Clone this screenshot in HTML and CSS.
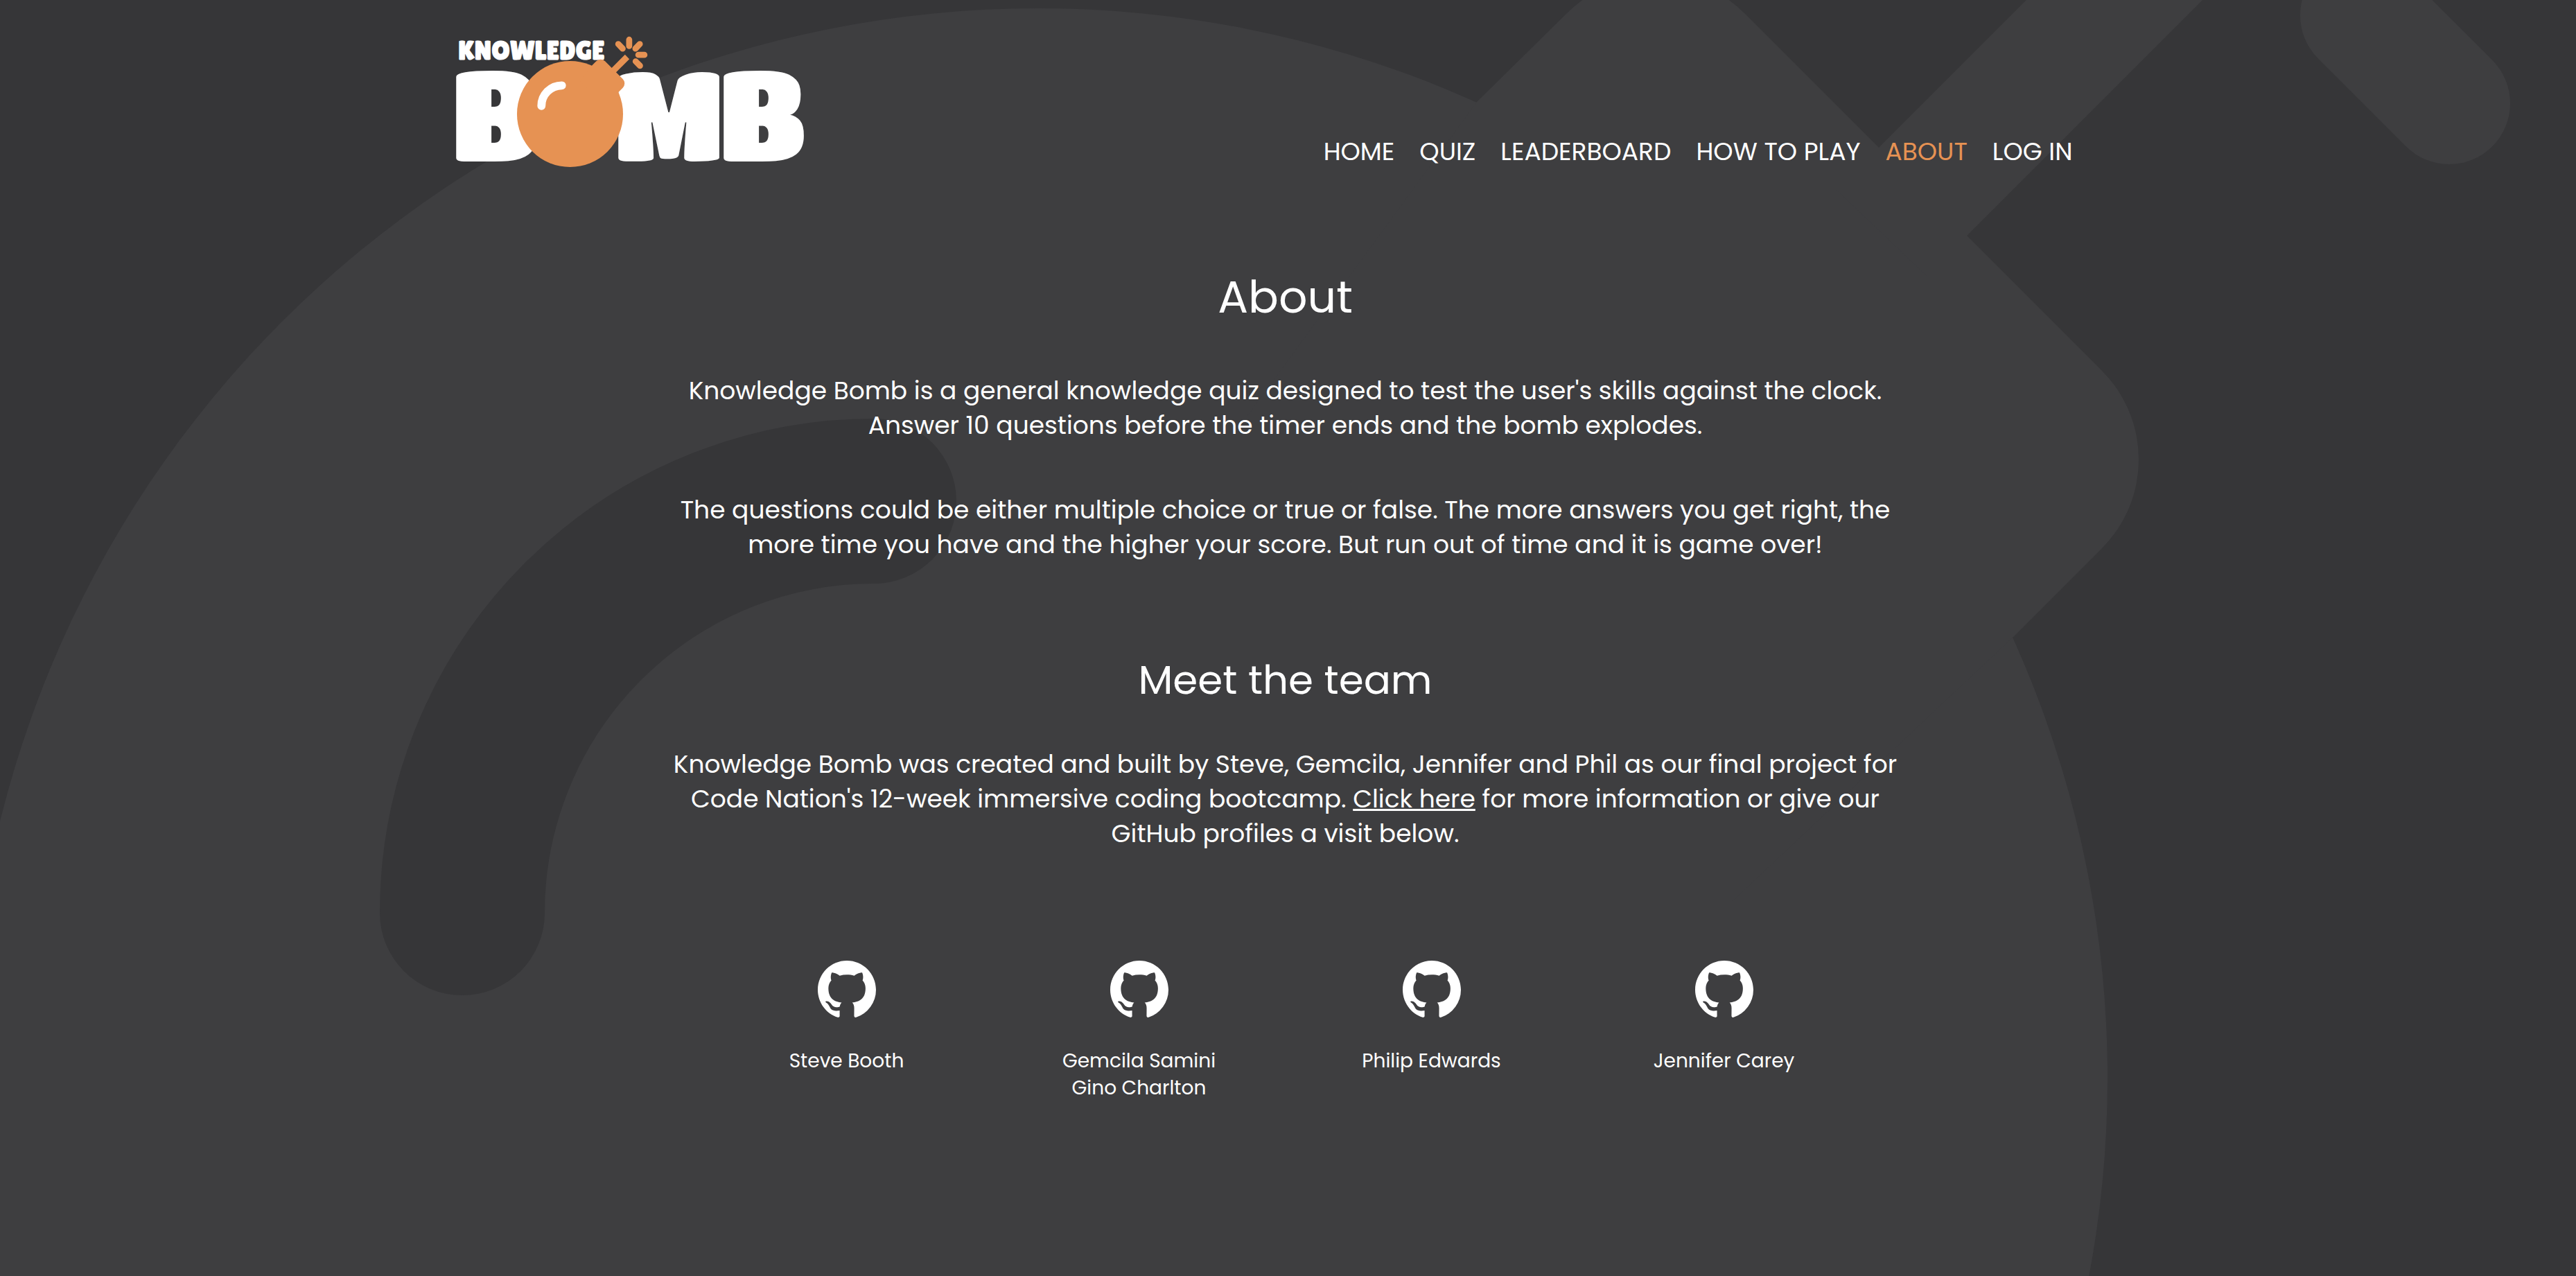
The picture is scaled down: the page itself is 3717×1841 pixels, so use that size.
FILE: index.html
```html
<!DOCTYPE html>
<html lang="en">
<head>
<meta charset="utf-8">
<meta name="viewport" content="width=device-width, initial-scale=1">
<title>Knowledge Bomb - About</title>
<link rel="stylesheet" href="styles.css">
</head>
<body>
<svg class="backdrop" viewBox="0 0 3717 1841" preserveAspectRatio="xMidYMin slice" aria-hidden="true">
  <defs>
    <g id="bomb">
      <circle cx="1498" cy="1555" r="1543"/>
      <path d="M2131 147L2261 19A181 181 0 0 1 2517 19L3033 535A181 181 0 0 1 3033 791L2906 918L2500 1300L1800 600Z"/>
      <path d="M2650 274L3097 -173L3224 -46L2780 398Z"/>
      <path class="sparks" d="M3219 -609V-424M2902 -482L3029 -349M3528 -482L3401 -349M3486 -167H3663M3407 22L3534 149"/>
    </g>
    <path id="shine" d="M667 1317A594 594 0 0 1 1261 723"/>
    <path id="github" d="M8 0C3.58 0 0 3.58 0 8c0 3.54 2.29 6.53 5.47 7.59.4.07.55-.17.55-.38 0-.19-.01-.82-.01-1.49-2.01.37-2.53-.49-2.69-.94-.09-.23-.48-.94-.82-1.13-.28-.15-.68-.52-.01-.53.63-.01 1.08.58 1.23.82.72 1.21 1.87.87 2.33.66.07-.52.28-.87.51-1.07-1.78-.2-3.64-.89-3.64-3.95 0-.87.31-1.59.82-2.15-.08-.2-.36-1.02.08-2.12 0 0 .67-.21 2.2.82.64-.18 1.32-.27 2-.27s1.36.09 2 .27c1.53-1.04 2.2-.82 2.2-.82.44 1.1.16 1.92.08 2.12.51.56.82 1.27.82 2.15 0 3.07-1.87 3.75-3.65 3.95.29.25.54.73.54 1.48 0 1.07-.01 1.93-.01 2.2 0 .21.15.46.55.38A8.01 8.01 0 0 0 16 8c0-4.42-3.58-8-8-8z"/>
  </defs>
  <use class="backdrop-bomb" href="#bomb"/>
  <use class="backdrop-shine" href="#shine"/>
</svg>
<div class="page">
  <header class="header">
    <a class="logo-link" href="#" aria-label="Knowledge Bomb home">
      <svg class="logo" viewBox="0 0 510 194">
        <text class="logo-top" x="6" y="36">KNOWLEDGE</text>
        <text class="logo-main" x="-4" y="183">B</text>
        <text class="logo-main" x="230" y="183">M</text>
        <text class="logo-main" x="382" y="183">B</text>
        <g transform="translate(167.5 114.5) scale(.0496) translate(-1498 -1554)">
          <use class="logo-bomb" href="#bomb"/>
          <use class="logo-shine" href="#shine"/>
        </g>
      </svg>
    </a>
    <nav class="nav">
      <a href="#">HOME</a>
      <a href="#">QUIZ</a>
      <a href="#">LEADERBOARD</a>
      <a href="#">HOW TO PLAY</a>
      <a class="active" href="#" aria-current="page">ABOUT</a>
      <a href="#">LOG IN</a>
    </nav>
  </header>
  <main class="content">
    <h1>About</h1>
    <p>Knowledge Bomb is a general knowledge quiz designed to test the user's skills against the clock. Answer 10 questions before the timer ends and the bomb explodes.</p>
    <p>The questions could be either multiple choice or true or false. The more answers you get right, the more time you have and the higher your score. But run out of time and it is game over!</p>
    <h2>Meet the team</h2>
    <p>Knowledge Bomb was created and built by Steve, Gemcila, Jennifer and Phil as our final project for Code Nation's 12-week immersive coding bootcamp. <a href="#">Click here</a> for more information or give our GitHub profiles a visit below.</p>
    <ul class="team">
      <li><a href="#"><svg class="github" viewBox="0 0 16 16" aria-hidden="true"><use href="#github"/></svg><span>Steve Booth</span></a></li>
      <li><a href="#"><svg class="github" viewBox="0 0 16 16" aria-hidden="true"><use href="#github"/></svg><span>Gemcila Samini<br>Gino Charlton</span></a></li>
      <li><a href="#"><svg class="github" viewBox="0 0 16 16" aria-hidden="true"><use href="#github"/></svg><span>Philip Edwards</span></a></li>
      <li><a href="#"><svg class="github" viewBox="0 0 16 16" aria-hidden="true"><use href="#github"/></svg><span>Jennifer Carey</span></a></li>
    </ul>
  </main>
</div>
</body>
</html>
```

FILE: styles.css
```css
* {
  box-sizing: border-box;
}

body {
  margin: 0;
  min-height: 100vh;
  position: relative;
  overflow-x: hidden;
  background: #363638;
  color: #fff;
  font-family: "Poppins", "Inter", sans-serif;
  font-size: 36px;
  line-height: 50px;
}

a {
  color: inherit;
}

.backdrop {
  position: absolute;
  top: 0;
  left: 0;
  width: 100%;
  height: 100%;
  z-index: -1;
}

.sparks {
  fill: none;
  stroke: currentColor;
  stroke-width: 176px;
  stroke-linecap: round;
}

.backdrop-bomb {
  fill: #3e3e40;
  color: #3e3e40;
}

.backdrop-shine,
.logo-shine {
  fill: none;
  stroke: #363638;
  stroke-width: 238px;
  stroke-linecap: round;
}

.page {
  padding: 50px 8px 120px 0;
}

.header {
  display: flex;
  flex-wrap: wrap;
  justify-content: space-between;
  align-items: flex-end;
  max-width: 2400px;
  margin: 0 auto 140px;
  padding-right: 64px;
}

.logo-link,
.logo {
  display: block;
}

.logo {
  width: 510px;
  height: 194px;
  overflow: visible;
}

.logo text {
  fill: #fff;
}

.logo .logo-top {
  font-family: "Lilita One", "Lato", sans-serif;
  font-size: 38px;
  stroke: #fff;
  stroke-width: 1px;
}

.logo .logo-main {
  font-family: "Titan One", "Lato", sans-serif;
  font-size: 182px;
}

.logo-bomb {
  fill: #e69253;
  color: #e69253;
}

.logo-shine {
  stroke: #fff;
}

.nav {
  display: flex;
  flex-wrap: wrap;
  gap: 36px;
}

.nav a {
  text-decoration: none;
}

.nav .active {
  color: #e69253;
}

.content {
  max-width: 1800px;
  margin: 0 auto;
  text-align: center;
}

h1,
h2 {
  margin: 0;
  font-weight: 400;
}

h1 {
  margin-bottom: 65px;
  font-size: 65px;
  line-height: 90px;
}

h2 {
  margin: 130px 0 57px;
  font-size: 58px;
  line-height: 80px;
}

p {
  margin: 0 0 72px;
}

.team {
  display: grid;
  grid-template-columns: repeat(4, 1fr);
  max-width: 1688px;
  margin: 158px auto 0;
  padding: 0;
  list-style: none;
  font-size: 28px;
  line-height: 39px;
}

.team a {
  display: flex;
  flex-direction: column;
  align-items: center;
  gap: 41px;
  text-decoration: none;
}

.github {
  width: 84px;
  height: 84px;
  fill: #fff;
}
```
